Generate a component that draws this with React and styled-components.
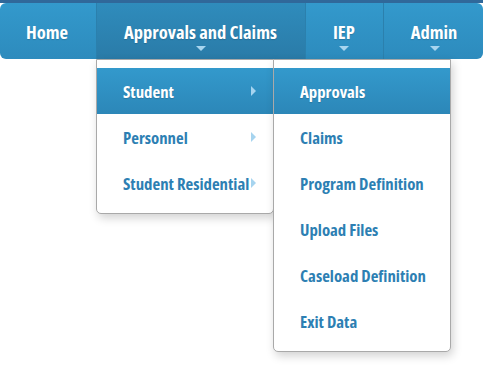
import React from "react";
import styled, { createGlobalStyle } from "styled-components";

const GlobalStyle = createGlobalStyle`
  body {
    margin: 0;
    background: #ffffff;
    font-family: "Open Sans", "DejaVu Sans Condensed", sans-serif;
    font-stretch: condensed;
  }
`;

const Page = styled.div`
  position: relative;
  min-height: 383px;
`;

const TopStrip = styled.div`
  height: 3px;
  background: #30689a;
`;

const NavBar = styled.nav`
  display: flex;
  height: 56px;
  border-radius: 6px;
  background: linear-gradient(#3399cc, #2d8bbd);
`;

const NavItem = styled.div`
  position: relative;
  display: flex;
  align-items: center;
  justify-content: center;
  flex-shrink: 0;
  padding: ${(p) => (p.$first ? "0 28px 0 26px" : "0 28px 0 27px")};
  color: #ffffff;
  font-size: 18.5px;
  font-weight: bold;
  white-space: nowrap;
  text-shadow: 0 1px 1px rgba(0, 0, 0, 0.15);
  border-left: ${(p) => (p.$first ? "none" : "1px solid #2b80ad")};
  background: ${(p) =>
    p.$active ? "linear-gradient(#2f8cbc, #2a7ba8)" : "transparent"};
  border-radius: ${(p) => (p.$first ? "6px 0 0 6px" : "0")};
`;

const Caret = styled.span`
  position: absolute;
  left: 50%;
  bottom: 8px;
  margin-left: -5px;
  border-left: 5px solid transparent;
  border-right: 5px solid transparent;
  border-top: 5px solid #a8d5ef;
`;

const Menu = styled.div`
  position: absolute;
  top: ${(p) => p.$top}px;
  left: ${(p) => p.$left}px;
  width: 176px;
  padding: 8px 0 7px;
  background: #ffffff;
  border: 1px solid #a9a9a9;
  border-radius: 0 0 5px 5px;
  box-shadow: 2px 4px 10px rgba(0, 0, 0, 0.18);
  text-shadow: none;
  z-index: 5;
`;

const MenuItem = styled.div`
  position: relative;
  display: flex;
  align-items: center;
  height: 46px;
  padding: 0 17px 0 26px;
  font-size: 16.8px;
  font-weight: bold;
  white-space: nowrap;
  color: ${(p) => (p.$active ? "#ffffff" : "#2d7fb3")};
  background: ${(p) =>
    p.$active ? "linear-gradient(#3399cc, #2c87b8)" : "transparent"};
  text-shadow: ${(p) => (p.$active ? "0 1px 1px rgba(0,0,0,0.15)" : "none")};
`;

const RightArrow = styled.span`
  margin-left: auto;
  border-top: 5px solid transparent;
  border-bottom: 5px solid transparent;
  border-left: 5px solid #a6d4ef;
`;

const studentLinks = [
  "Approvals",
  "Claims",
  "Program Definition",
  "Upload Files",
  "Caseload Definition",
  "Exit Data",
];

export default function App() {
  return (
    <Page>
      <GlobalStyle />
      <TopStrip />
      <NavBar>
        <NavItem $first>Home</NavItem>
        <NavItem $active>
          Approvals and Claims
          <Caret />
          <Menu $top={56} $left={-1}>
            <MenuItem $active>
              Student
              <RightArrow />
              <Menu $top={-9} $left={176}>
                {studentLinks.map((name, i) => (
                  <MenuItem key={name} $active={i === 0}>
                    {name}
                  </MenuItem>
                ))}
              </Menu>
            </MenuItem>
            <MenuItem>
              Personnel
              <RightArrow />
            </MenuItem>
            <MenuItem>
              Student Residential
              <RightArrow />
            </MenuItem>
          </Menu>
        </NavItem>
        <NavItem>
          IEP
          <Caret />
        </NavItem>
        <NavItem>
          Admin
          <Caret />
        </NavItem>
      </NavBar>
    </Page>
  );
}
